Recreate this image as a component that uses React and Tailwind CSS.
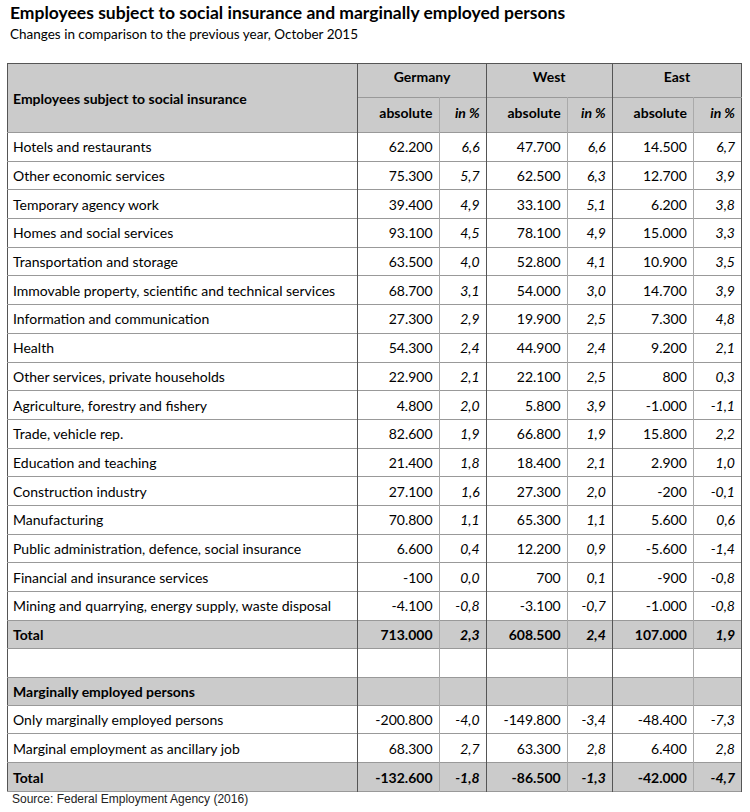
import React from "react";

const rows = [
  ["Hotels and restaurants", "62.200", "6,6", "47.700", "6,6", "14.500", "6,7"],
  ["Other economic services", "75.300", "5,7", "62.500", "6,3", "12.700", "3,9"],
  ["Temporary agency work", "39.400", "4,9", "33.100", "5,1", "6.200", "3,8"],
  ["Homes and social services", "93.100", "4,5", "78.100", "4,9", "15.000", "3,3"],
  ["Transportation and storage", "63.500", "4,0", "52.800", "4,1", "10.900", "3,5"],
  ["Immovable property, scientific and technical services", "68.700", "3,1", "54.000", "3,0", "14.700", "3,9"],
  ["Information and communication", "27.300", "2,9", "19.900", "2,5", "7.300", "4,8"],
  ["Health", "54.300", "2,4", "44.900", "2,4", "9.200", "2,1"],
  ["Other services, private households", "22.900", "2,1", "22.100", "2,5", "800", "0,3"],
  ["Agriculture, forestry and fishery", "4.800", "2,0", "5.800", "3,9", "-1.000", "-1,1"],
  ["Trade, vehicle rep.", "82.600", "1,9", "66.800", "1,9", "15.800", "2,2"],
  ["Education and teaching", "21.400", "1,8", "18.400", "2,1", "2.900", "1,0"],
  ["Construction industry", "27.100", "1,6", "27.300", "2,0", "-200", "-0,1"],
  ["Manufacturing", "70.800", "1,1", "65.300", "1,1", "5.600", "0,6"],
  ["Public administration, defence, social insurance", "6.600", "0,4", "12.200", "0,9", "-5.600", "-1,4"],
  ["Financial and insurance services", "-100", "0,0", "700", "0,1", "-900", "-0,8"],
  ["Mining and quarrying, energy supply, waste disposal", "-4.100", "-0,8", "-3.100", "-0,7", "-1.000", "-0,8"],
];

const marginal = [
  ["Only marginally employed persons", "-200.800", "-4,0", "-149.800", "-3,4", "-48.400", "-7,3"],
  ["Marginal employment as ancillary job", "68.300", "2,7", "63.300", "2,8", "6.400", "2,8"],
];

// dark borders between groups, light ones inside a group
const cellBorders = [
  "border-r border-r-[#555]",
  "border-r border-r-[#aaa]",
  "border-r border-r-[#555]",
  "border-r border-r-[#aaa]",
  "border-r border-r-[#555]",
  "border-r border-r-[#aaa]",
  "border-r border-r-[#555]",
];

const Row = ({ cells, shaded, bold, height = "h-[28.7px]" }) => (
  <tr className={`${height} ${shaded ? "bg-[#cbcbcb]" : "bg-white"} border-b border-b-[#999]`}>
    {cells.map((c, i) => (
      <td
        key={i}
        className={`${cellBorders[i]} ${i === 0 ? "pl-[5px] text-left" : "pr-[6px] text-right"} ${
          i > 0 && i % 2 === 0 ? "italic" : ""
        } ${bold ? "font-bold" : ""} p-0`}
      >
        {c}
      </td>
    ))}
  </tr>
);

export default function App() {
  return (
    <div className="w-[750px] h-[812px] bg-white text-black font-['Lato',sans-serif] overflow-hidden">
      <div className="pl-[10px] pt-[2px]">
        <h1 className="text-[17.5px] font-bold leading-[22px]">
          Employees subject to social insurance and marginally employed persons
        </h1>
        <p className="text-[13.5px] leading-[18px] mt-[1px]">
          Changes in comparison to the previous year, October 2015
        </p>
      </div>

      <table className="ml-[7px] mt-[20px] w-[735px] border-collapse border border-[#555] text-[14px] table-fixed">
        <colgroup>
          <col className="w-[350px]" />
          <col className="w-[81px]" />
          <col className="w-[47px]" />
          <col className="w-[81px]" />
          <col className="w-[45px]" />
          <col className="w-[81px]" />
          <col className="w-[48px]" />
        </colgroup>
        <thead>
          <tr className="h-[34px] bg-[#cbcbcb] border-b border-b-[#999]">
            <td rowSpan={2} className="border-r border-r-[#555] pl-[5px] font-bold align-middle">
              Employees subject to social insurance
            </td>
            <td colSpan={2} className="border-r border-r-[#555] text-center font-bold align-top pt-[2px]">
              Germany
            </td>
            <td colSpan={2} className="border-r border-r-[#555] text-center font-bold align-top pt-[2px]">
              West
            </td>
            <td colSpan={2} className="text-center font-bold align-top pt-[2px]">
              East
            </td>
          </tr>
          <tr className="h-[35px] bg-[#cbcbcb] border-b border-b-[#999]">
            <td className="border-r border-r-[#aaa] text-right pr-[6px] font-bold align-top pt-[4px]">absolute</td>
            <td className="border-r border-r-[#555] text-right pr-[6px] font-bold italic align-top pt-[4px]">in %</td>
            <td className="border-r border-r-[#aaa] text-right pr-[6px] font-bold align-top pt-[4px]">absolute</td>
            <td className="border-r border-r-[#555] text-right pr-[6px] font-bold italic align-top pt-[4px]">in %</td>
            <td className="border-r border-r-[#aaa] text-right pr-[6px] font-bold align-top pt-[4px]">absolute</td>
            <td className="text-right pr-[6px] font-bold italic align-top pt-[4px]">in %</td>
          </tr>
        </thead>
        <tbody>
          {rows.map((r) => (
            <Row key={r[0]} cells={r} />
          ))}
          <Row cells={["Total", "713.000", "2,3", "608.500", "2,4", "107.000", "1,9"]} shaded bold height="h-[28px]" />
          <Row cells={["", "", "", "", "", "", ""]} height="h-[29px]" />
          <Row cells={["Marginally employed persons", "", "", "", "", "", ""]} shaded bold height="h-[28px]" />
          {marginal.map((r) => (
            <Row key={r[0]} cells={r} />
          ))}
          <Row cells={["Total", "-132.600", "-1,8", "-86.500", "-1,3", "-42.000", "-4,7"]} shaded bold height="h-[29px]" />
        </tbody>
      </table>

      <p className="pl-[12px] mt-[0px] text-[12px] leading-[14px] font-['Liberation_Sans',Arial,sans-serif] text-[#222]">
        Source: Federal Employment Agency (2016)
      </p>
    </div>
  );
}
